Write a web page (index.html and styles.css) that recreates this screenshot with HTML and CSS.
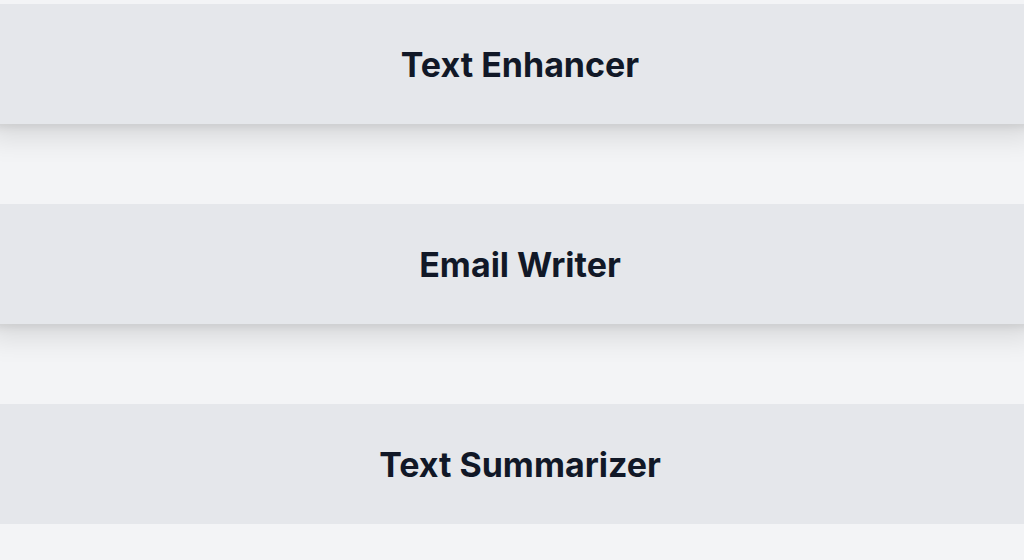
FILE: index.html
```html
<!DOCTYPE html>
<html lang="en">
<head>
    <meta charset="UTF-8">
    <meta name="viewport" content="width=device-width, initial-scale=1.0">
    <title>AI Tools</title>
    <link rel="stylesheet" href="styles.css">
</head>
<body>

    <!-- Tool List -->
    <main class="tool-list">
        <a class="tool-card" href="#">Text Enhancer</a>
        <a class="tool-card" href="#">Email Writer</a>
        <a class="tool-card" href="#">Text Summarizer</a>
    </main>

</body>
</html>
```
FILE: styles.css
```css
body {
    font-family: Inter, "Noto Sans", sans-serif;
    background-color: #f3f4f6;
    margin: 0;
    padding: 0;
    overflow: hidden;
}

.tool-list {
    display: flex;
    flex-direction: column;
    gap: 80px;
    padding-top: 4px;
}

.tool-card {
    display: flex;
    align-items: center;
    justify-content: center;
    height: 120px;
    margin: 0 -16px;
    padding-left: 16px;
    background-color: #e5e7eb;
    color: #111827;
    font-size: 34px;
    font-weight: 700;
    text-decoration: none;
    box-shadow: 0 20px 25px -5px rgba(0, 0, 0, 0.1), 0 8px 10px -6px rgba(0, 0, 0, 0.1);
}
```
